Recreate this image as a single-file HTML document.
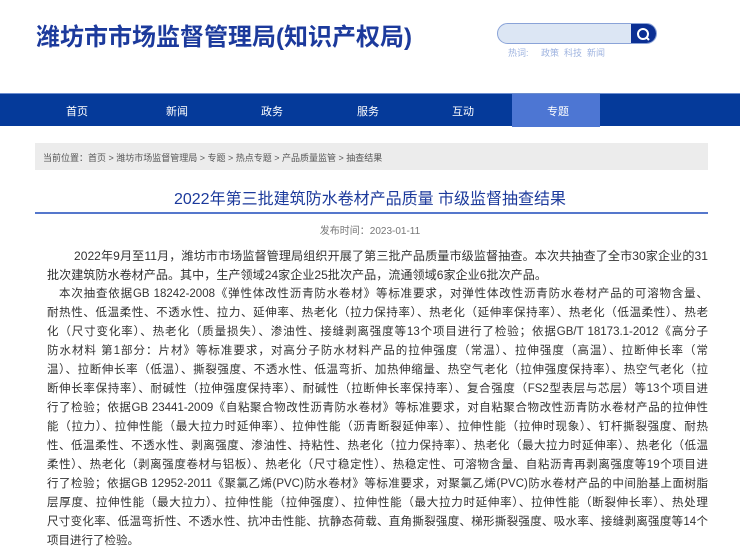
<!DOCTYPE html>
<html><head><meta charset="utf-8"><style>
*{margin:0;padding:0;box-sizing:border-box}
body{width:740px;height:548px;overflow:hidden;background:#fff;font-family:"Liberation Sans","Noto Sans CJK SC",sans-serif;position:relative}
.abs{position:absolute}
.logo{left:36px;top:17px;font-size:24px;font-weight:bold;color:#1c3a9c;white-space:nowrap}
.search{left:497px;top:23px;width:160px;height:21px;border:1px solid #8aa3d8;border-radius:11px;background:#dce6f4;overflow:hidden}
.btn{position:absolute;right:0;top:0;width:25px;height:21px;background:#0b2f93}
.hot{left:508px;top:46px;font-size:9px;color:#9fb4e0;white-space:nowrap}
.nav{left:0;top:93px;width:740px;height:33px;background:#053a9a;border-top:1px solid #6d8ed0}
.nav span{position:absolute;top:9px;color:#fff;font-size:11px;width:60px;text-align:center}
.act{position:absolute;left:512px;top:0;width:88px;height:33px;background:#4d76d3}
.bc{left:35px;top:143px;width:673px;height:27px;background:#ececec;font-size:9px;color:#555;padding:8px 0 0 8px;white-space:nowrap}
.title{left:0;width:740px;top:185px;text-align:center;font-size:16px;color:#1c3a9c}
.line{left:35px;top:212px;width:673px;height:2px;background:#5577cc}
.date{left:0;width:740px;top:222px;text-align:center;font-size:10px;color:#777}
.body{left:47px;top:247px;width:661px;font-size:11.5px;color:#333;line-height:19px}
.body div{text-align:justify;text-align-last:justify;white-space:nowrap;overflow:hidden}
.body div.l{text-align-last:left}
.body div.f{font-size:12.1px}
</style></head><body>
<div class="abs logo">潍坊市市场监督管理局(知识产权局)</div>
<div class="abs search"><div class="btn"><svg width="25" height="21"><circle cx="12" cy="10" r="5" fill="none" stroke="#fff" stroke-width="2"/><line x1="15.5" y1="13.5" x2="18" y2="16" stroke="#fff" stroke-width="2"/></svg></div></div>
<div class="abs hot">热词:&nbsp;&nbsp;&nbsp;&nbsp;&nbsp;政策&nbsp;&nbsp;科技&nbsp;&nbsp;新闻</div>
<div class="abs nav"><div class="act"></div>
<span style="left:47px">首页</span><span style="left:147px">新闻</span><span style="left:242px">政务</span><span style="left:338px">服务</span><span style="left:433px">互动</span><span style="left:528px">专题</span></div>
<div class="abs bc">当前位置：首页 &gt; 潍坊市场监督管理局 &gt; 专题 &gt; 热点专题 &gt; 产品质量监管 &gt; 抽查结果</div>
<div class="abs title">2022年第三批建筑防水卷材产品质量 市级监督抽查结果</div>
<div class="abs line"></div>
<div class="abs date">发布时间：2023-01-11</div>
<div class="abs body">
<div class="f" style="padding-left:27px">2022年9月至11月，潍坊市市场监督管理局组织开展了第三批产品质量市级监督抽查。本次共抽查了全市30家企业的31</div>
<div class="l f">批次建筑防水卷材产品。其中，生产领域24家企业25批次产品，流通领域6家企业6批次产品。</div>
<div style="padding-left:12px">本次抽查依据GB 18242-2008《弹性体改性沥青防水卷材》等标准要求，对弹性体改性沥青防水卷材产品的可溶物含量、</div>
<div>耐热性、低温柔性、不透水性、拉力、延伸率、热老化（拉力保持率）、热老化（延伸率保持率）、热老化（低温柔性）、热老</div>
<div>化（尺寸变化率）、热老化（质量损失）、渗油性、接缝剥离强度等13个项目进行了检验；依据GB/T 18173.1-2012《高分子</div>
<div>防水材料 第1部分：片材》等标准要求，对高分子防水材料产品的拉伸强度（常温）、拉伸强度（高温）、拉断伸长率（常</div>
<div>温）、拉断伸长率（低温）、撕裂强度、不透水性、低温弯折、加热伸缩量、热空气老化（拉伸强度保持率）、热空气老化（拉</div>
<div>断伸长率保持率）、耐碱性（拉伸强度保持率）、耐碱性（拉断伸长率保持率）、复合强度（FS2型表层与芯层）等13个项目进</div>
<div>行了检验；依据GB 23441-2009《自粘聚合物改性沥青防水卷材》等标准要求，对自粘聚合物改性沥青防水卷材产品的拉伸性</div>
<div>能（拉力）、拉伸性能（最大拉力时延伸率）、拉伸性能（沥青断裂延伸率）、拉伸性能（拉伸时现象）、钉杆撕裂强度、耐热</div>
<div>性、低温柔性、不透水性、剥离强度、渗油性、持粘性、热老化（拉力保持率）、热老化（最大拉力时延伸率）、热老化（低温</div>
<div>柔性）、热老化（剥离强度卷材与铝板）、热老化（尺寸稳定性）、热稳定性、可溶物含量、自粘沥青再剥离强度等19个项目进</div>
<div>行了检验；依据GB 12952-2011《聚氯乙烯(PVC)防水卷材》等标准要求，对聚氯乙烯(PVC)防水卷材产品的中间胎基上面树脂</div>
<div>层厚度、拉伸性能（最大拉力）、拉伸性能（拉伸强度）、拉伸性能（最大拉力时延伸率）、拉伸性能（断裂伸长率）、热处理</div>
<div>尺寸变化率、低温弯折性、不透水性、抗冲击性能、抗静态荷载、直角撕裂强度、梯形撕裂强度、吸水率、接缝剥离强度等14个</div>
<div class="l">项目进行了检验。</div>
</div>
</body></html>
